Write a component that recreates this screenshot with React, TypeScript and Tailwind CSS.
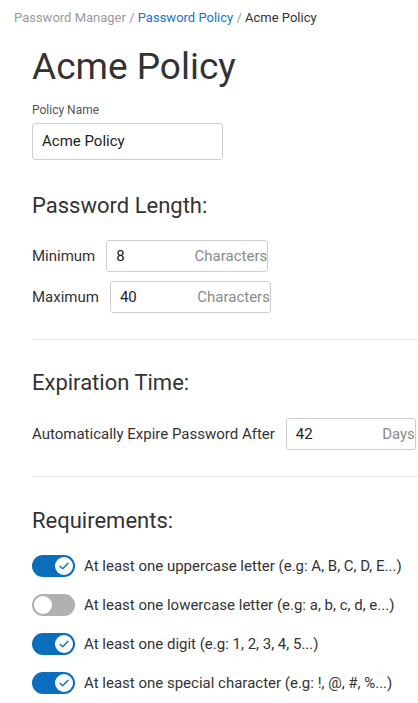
import { useState } from 'react'

function Toggle({ on }: { on: boolean }) {
  return (
    <span
      className={`relative inline-flex h-[22px] w-[43px] shrink-0 items-center rounded-full ${
        on ? 'bg-[#0b6ebd]' : 'bg-[#b0b0b0]'
      }`}
    >
      <span
        className={`absolute top-[2px] flex h-[18px] w-[18px] items-center justify-center rounded-full bg-white ${
          on ? 'right-[2px]' : 'left-[2px]'
        }`}
      >
        {on && (
          <svg width="10" height="8" viewBox="0 0 10 8" fill="none">
            <path d="M1 4.2L3.7 6.8L9 1.2" stroke="#0b6ebd" strokeWidth="1.3" strokeLinecap="round" strokeLinejoin="round" />
          </svg>
        )}
      </span>
    </span>
  )
}

function UnitInput({ value, unit, width }: { value: string; unit: string; width: string }) {
  return (
    <div className={`flex h-[32px] shrink-0 items-center justify-between rounded-[3px] border border-[#cfcfcf] bg-white pl-[9px] pr-0 ${width}`}>
      <span className="text-[15px] text-[#222]">{value}</span>
      <span className="text-[15px] text-[#8a8a8a]">{unit}</span>
    </div>
  )
}

export default function App() {
  const [reqs] = useState([
    { on: true, label: 'At least one uppercase letter (e.g: A, B, C, D, E...)' },
    { on: false, label: 'At least one lowercase letter (e.g: a, b, c, d, e...)' },
    { on: true, label: 'At least one digit (e.g: 1, 2, 3, 4, 5...)' },
    { on: true, label: 'At least one special character (e.g: !, @, #, %...)' },
  ])

  return (
    <div className="h-[703px] w-[418px] overflow-hidden bg-white font-['Roboto',sans-serif] text-[#333]">
      <nav className="pl-[14px] pt-[9px] text-[13px] leading-[18px] text-[#9a9a9a]">
        Password Manager / <span className="text-[#1a73c4]">Password Policy</span> /{' '}
        <span className="text-[#333]">Acme Policy</span>
      </nav>

      <div className="pl-[32px]">
        <h1 className="mt-[18px] text-[37px] font-normal leading-[44px] text-[#333]">Acme Policy</h1>

        <label className="mt-[14px] block text-[12px] leading-[14px] text-[#555]">Policy Name</label>
        <div className="mt-[6px] flex h-[37px] w-[191px] items-center rounded-[3px] border border-[#cfcfcf] px-[9px] text-[15px] text-[#222]">
          Acme Policy
        </div>

        <h2 className="mt-[32px] text-[22px] font-normal leading-[28px] text-[#333]">Password Length:</h2>

        <div className="mt-[20px] flex items-center gap-[11px]">
          <span className="text-[15px] text-[#333]">Minimum</span>
          <UnitInput value="8" unit="Characters" width="w-[162px]" />
        </div>
        <div className="mt-[9px] flex items-center gap-[11px]">
          <span className="text-[15px] text-[#333]">Maximum</span>
          <UnitInput value="40" unit="Characters" width="w-[161px]" />
        </div>

        <div className="mt-[26px] h-px bg-[#e3e3e3]" />

        <h2 className="mt-[29px] text-[22px] font-normal leading-[28px] text-[#333]">Expiration Time:</h2>

        <div className="mt-[21px] flex items-center gap-[11px]">
          <span className="whitespace-nowrap text-[15px] text-[#333]">Automatically Expire Password After</span>
          <UnitInput value="42" unit="Days" width="w-[130px]" />
        </div>

        <div className="mt-[26px] h-px bg-[#e3e3e3]" />

        <h2 className="mt-[30px] text-[22px] font-normal leading-[28px] text-[#333]">Requirements:</h2>

        <ul className="mt-[20px] flex flex-col gap-[17px]">
          {reqs.map((r) => (
            <li key={r.label} className="flex items-center gap-[9px]">
              <Toggle on={r.on} />
              <span className="whitespace-nowrap text-[15px] leading-[22px] text-[#333]">{r.label}</span>
            </li>
          ))}
        </ul>
      </div>
    </div>
  )
}
